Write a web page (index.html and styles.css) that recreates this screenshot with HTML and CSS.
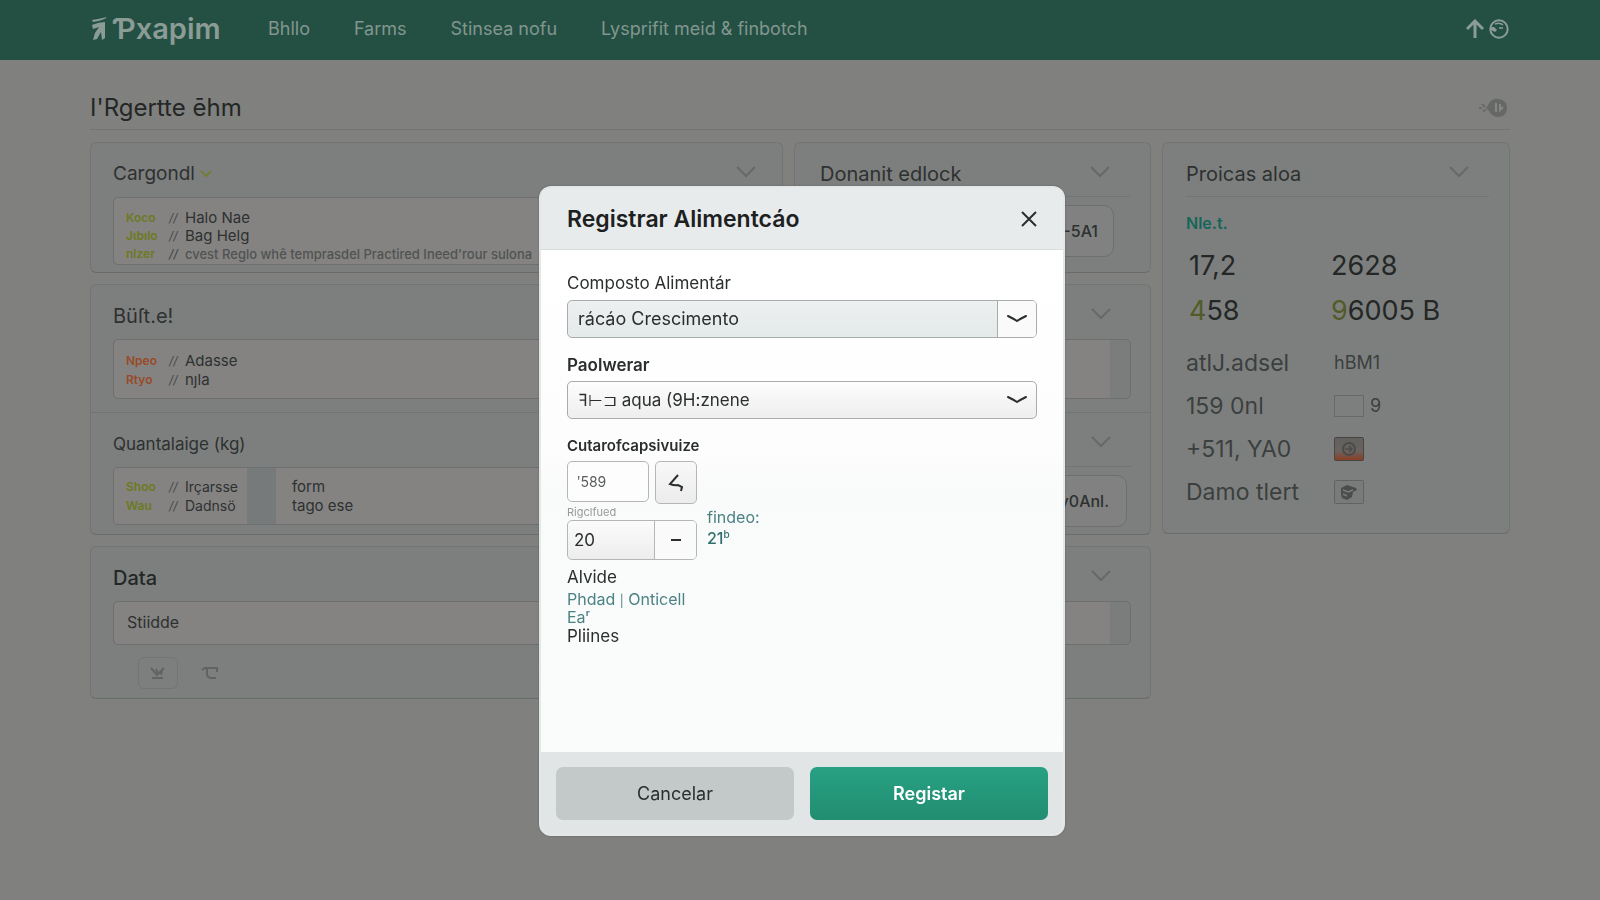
FILE: index.html
```html
<!DOCTYPE html>
<html lang="pt">
<head>
<meta charset="utf-8">
<title>Registrar Alimentcáo</title>
<link rel="stylesheet" href="styles.css">
</head>
<body>
<svg class="defs" aria-hidden="true">
  <symbol id="chev" viewBox="0 0 20 12"><path d="M1 1l9 9 9-9" fill="none" stroke="currentColor" stroke-width="2"/></symbol>
  <symbol id="flat" viewBox="0 0 20 10"><path d="M1 2q6 3 9 5 3-2 9-5" fill="none" stroke="currentColor" stroke-width="2" stroke-linecap="round"/></symbol>
</svg>

<header class="topbar">
  <a class="brand" href="#">
    <svg class="brand-mark" width="16" height="28" viewBox="0 0 16 28" aria-hidden="true"><path d="M0 5q7-1 15-3-2 3-14 5zM0 10q7-3 13-3v16l-3 2-1-8-4 7-4 1 2-7 4-6-6 2z" fill="currentColor"/></svg>
    <span>Ƥxapim</span>
  </a>
  <nav class="nav">
    <a href="#">Bhllo</a>
    <a href="#">Farms</a>
    <a href="#">Stinsea nofu</a>
    <a href="#">Lysprifit meid &amp; finbotch</a>
  </nav>
  <div class="tools">
    <button type="button" aria-label="Enviar"><svg width="18" height="20" viewBox="0 0 18 20"><path d="M9 19V3M1 10l8-8 8 8" fill="none" stroke="currentColor" stroke-width="3"/></svg></button>
    <button type="button" aria-label="Conta"><svg width="20" height="20" viewBox="0 0 20 20"><circle cx="10" cy="10" r="8.700" fill="none" stroke="currentColor" stroke-width="2"/><path d="M1 8l4 0 3 3-2 2-4-2z" fill="currentColor"/><path d="M6 5q5-2 8 1M10 9h4" fill="none" stroke="currentColor" stroke-width="1.500"/></svg></button>
  </div>
</header>

<main class="page">
  <div class="page-head">
    <h1>I'Rgertte ēhm</h1>
    <svg width="30" height="20" viewBox="0 0 30 20" aria-hidden="true"><path d="M1 10h3M4 6l3 3M5 13l3-1" stroke="#6a6b69" stroke-width="2"/><path d="M8 10q2-2 3-5 4-5 10-4 7 1 8 8 0 9-8 10-7 0-10-6z" fill="#666865"/><path d="M18 5v9M22 6v6l3-3" stroke="#858684" stroke-width="2" fill="none"/></svg>
  </div>

  <div class="columns">
    <div class="main">
      <section class="card cargo">
        <div class="card-head">
          <h2>Cargondl <svg class="lime" width="12" height="8" viewBox="0 0 12 8"><path d="M1 1l5 5 5-5" fill="none" stroke="currentColor" stroke-width="2"/></svg></h2>
          <svg class="chev"><use href="#chev"/></svg>
        </div>
        <div class="box rows">
          <div class="row"><b>Koco</b><i>//</i><span>Halo Nae</span></div>
          <div class="row"><b>Jɩbılo</b><i>//</i><span>Bag Helg</span></div>
          <div class="row small"><b>nlzer</b><i>//</i><span>cvest Reglo whê temprasdel Practired Ineed'rour sulona</span></div>
        </div>
      </section>

      <section class="card donor">
        <div class="card-head ruled">
          <h2>Donanit edlock</h2>
          <svg class="chev"><use href="#chev"/></svg>
        </div>
        <div class="chip">-5A1</div>
      </section>

      <section class="card wide">
        <div class="block">
          <div class="card-head">
            <h2>Büſt.e!</h2>
            <svg class="chev"><use href="#chev"/></svg>
          </div>
          <div class="box tail rows orange">
            <div class="row"><b>Npeo</b><i>//</i><span>Adasse</span></div>
            <div class="row"><b>Rtyo</b><i>//</i><span>nȷla</span></div>
          </div>
        </div>
        <div class="block split">
          <div class="qty">
            <div class="card-head"><h3>Quantalaige (kg)</h3></div>
            <div class="pair">
              <div class="rows cell">
                <div class="row"><b>Shoo</b><i>//</i><span>Irçarsse</span></div>
                <div class="row"><b>Wau</b><i>//</i><span>Dadnsö</span></div>
              </div>
              <div class="rows cell">
                <div class="row">form</div>
                <div class="row">tago ese</div>
              </div>
            </div>
          </div>
          <div class="amount">
            <div class="card-head ruled"><svg class="chev"><use href="#chev"/></svg></div>
            <div class="chip">y0Anl.</div>
          </div>
        </div>
      </section>

      <section class="card wide data">
        <div class="card-head">
          <h2 class="strong">Data</h2>
          <svg class="chev"><use href="#chev"/></svg>
        </div>
        <div class="box tail single">Stiidde</div>
        <div class="actions">
          <button type="button" class="framed" aria-label="Baixar"><svg width="16" height="14" viewBox="0 0 16 14"><path d="M1 2l6 7 7-7M6 3l2 4M2 12h11M11 9l1-4" fill="none" stroke="currentColor" stroke-width="2"/></svg></button>
          <button type="button" aria-label="Recortar"><svg width="18" height="14" viewBox="0 0 18 14"><path d="M1 4l3-2h12v4M6 1v8q1 3 4 3h5" fill="none" stroke="currentColor" stroke-width="2"/></svg></button>
        </div>
      </section>
    </div>

    <aside class="card side">
      <div class="card-head ruled">
        <h2>Proicas aloa</h2>
        <svg class="chev"><use href="#chev"/></svg>
      </div>
      <p class="tag">Nle.t.</p>
      <div class="stats big">
        <span>17,2</span><span>2628</span>
        <span><em>4</em>58</span><span><em>9</em>6005 B</span>
      </div>
      <div class="stats">
        <span>atlJ.adsel</span><span class="mini">hBM1</span>
        <span>159 0nl</span><span class="mini"><svg width="30" height="22"><rect x=".5" y=".5" width="29" height="21" fill="none" stroke="#666968"/></svg>9</span>
        <span>+511, YA0</span><span class="mini"><svg width="30" height="24" viewBox="0 0 30 24"><defs><linearGradient id="glow" x2="0" y2="1"><stop offset="0" stop-color="#606160"/><stop offset=".6" stop-color="#6b625d"/><stop offset="1" stop-color="#8a3c22"/></linearGradient></defs><rect x=".5" y=".5" width="29" height="23" rx="1" fill="url(#glow)" stroke="#4b4542"/><circle cx="15" cy="12" r="6" fill="none" stroke="#4a4c4b" stroke-width="2"/><path d="M11 12h7M15 9l3 3-3 3" fill="none" stroke="#4a4c4b" stroke-width="1.500"/></svg></span>
        <span>Damo tlert</span><span class="mini"><svg width="30" height="24" viewBox="0 0 30 24"><rect x=".5" y=".5" width="29" height="23" rx="1" fill="#787b7a" stroke="#5f6362"/><path d="M7 8l6-3 9 3 1 2-4 2-1 5-5 3-5-2-1-4z" fill="#4a4d4c"/><path d="M9 10l5 2 5-2M9 14l4 2" fill="none" stroke="#787b7a" stroke-width="1.500"/></svg></span>
      </div>
    </aside>
  </div>
</main>

<div class="overlay">
  <form class="modal" role="dialog" aria-labelledby="dlg-title">
    <div class="modal-head">
      <h2 id="dlg-title">Registrar Alimentcáo</h2>
      <button type="button" class="close" aria-label="Fechar"><svg width="16" height="16" viewBox="0 0 16 16"><path d="M1 1l14 14M15 1L1 15" stroke="currentColor" stroke-width="2"/></svg></button>
    </div>
    <div class="modal-body">
      <label for="feed">Composto Alimentár</label>
      <div class="select cool">
        <select id="feed"><option>rácáo Crescimento</option></select>
        <span class="arrow"><svg width="20" height="10"><use href="#flat"/></svg></span>
      </div>
      <label class="bold" for="lot">Paolwerar</label>
      <div class="select">
        <select id="lot"><option>ꟻ⊢⊐ aqua (9H:znene</option></select>
        <span class="arrow"><svg width="20" height="10"><use href="#flat"/></svg></span>
      </div>
      <label class="bold fine" for="count">Cutarofcapsivuize</label>
      <div class="line">
        <input id="count" class="count" type="text" value="ʹ589">
        <button type="button" class="step" aria-label="Anterior"><svg width="16" height="18" viewBox="0 0 16 18"><path d="M10 1L2 10q5 2 8 1l4 2-1 4" fill="none" stroke="currentColor" stroke-width="2"/></svg></button>
      </div>
      <div class="line second">
        <div>
          <label class="hint" for="num">Rigclfued</label>
          <div class="stepper">
            <input id="num" type="text" value="20">
            <button type="button" aria-label="Menos"><svg width="10" height="2"><rect width="10" height="2" fill="currentColor"/></svg></button>
          </div>
        </div>
        <p class="found">findeo:<br><b>21<sup>b</sup></b></p>
      </div>
      <p class="text">Alvide</p>
      <p class="links"><a href="#">Phdad</a> <span>|</span> <a href="#">Onticell</a><br><a href="#">Eaʳ</a></p>
      <p class="text">Pliines</p>
    </div>
    <div class="modal-foot">
      <button type="button" class="cancel">Cancelar</button>
      <button type="submit" class="submit">Registar</button>
    </div>
  </form>
</div>
</body>
</html>
```
FILE: styles.css
```css
* { box-sizing: border-box; }

body {
  margin: 0;
  min-height: 100vh;
  background: #80807e;
  color: #2d3130;
  font: 16px/20px Inter, "Liberation Sans", sans-serif;
}

h1, h2, h3, p { margin: 0; font-weight: 400; }
button { padding: 0; border: 0; background: none; color: inherit; font: inherit; }
svg { display: block; flex: none; }
a { color: inherit; text-decoration: none; }
.defs { position: absolute; width: 0; height: 0; }

.topbar {
  display: flex;
  align-items: center;
  height: 60px;
  padding: 0 91px 2px 90px;
  background: #245043;
  color: #8b9c96;
}
.brand { display: flex; align-items: center; gap: 4px; width: 178px; font-size: 29px; line-height: 40px; font-weight: 600; padding-left: 2px; }
.brand-mark { width: 16px; height: 28px; }
.nav { display: flex; gap: 44px; font-size: 18px; color: #82968f; }
.tools { display: flex; gap: 5px; margin-left: auto; }

.page { padding: 28px 90px 0; }
.page-head {
  display: flex;
  align-items: center;
  justify-content: space-between;
  height: 42px;
  padding-bottom: 2px;
  padding-right: 2px;
  border-bottom: 1px solid #727472;
}
h1 { font-size: 24px; line-height: 36px; color: #232726; }

.columns { display: grid; grid-template-columns: minmax(0, 1061fr) minmax(0, 348fr); gap: 11px; align-items: start; margin-top: 12px; }
.main { display: grid; grid-template-columns: minmax(0, 693fr) minmax(0, 357fr); gap: 11px; }
.card { border: 1px solid #717474; border-bottom-color: #686c6b; border-radius: 6px; background: #7d7f7e; }
.cargo { padding: 0 22px 7px; }
.donor { padding: 0 20px 7px 25px; }
.wide { grid-column: 1 / -1; }
.card-head { display: flex; align-items: center; justify-content: space-between; height: 54px; padding: 8px 16px 0 0; }
.donor .card-head, .block .card-head, .data .card-head { padding-right: 20px; }
.cargo .card-head { padding-right: 4px; }
.cargo h2 { font-size: 19px; }
.ruled { border-bottom: 1px solid #717473; }
h2 { display: flex; align-items: center; gap: 5px; font-size: 20px; line-height: 28px; }
h3 { font-size: 17px; line-height: 24px; }
.strong { font-weight: 500; color: #232726; }
.lime { color: #737d3a; }
.chev { width: 20px; height: 12px; margin-top: -4px; color: #666968; }

.box { border: 1px solid #6c6f6e; border-radius: 5px; background: #848382; }
.tail { background: linear-gradient(#7b7d7d, #7b7d7d) right / 20px 100% no-repeat, #848382; }
.rows { padding: 9px 12px; }
.row { display: flex; align-items: center; height: 19px; font-size: 15px; white-space: nowrap; }
.row b { flex: none; width: 43px; font-size: 12px; font-weight: 600; color: #6c7a20; }
.row i { flex: none; width: 16px; font-size: 12px; color: #444847; }
.orange b { color: #994a27; }
.orange { padding-top: 11px; }
.cargo .row { height: 18px; }
.cargo .rows { padding: 11px 12px 1px; }
.cargo .small { font-size: 13px; font-weight: 500; color: #505352; overflow: hidden; }
.chip {
  width: fit-content;
  min-width: 120px;
  height: 52px;
  margin: 8px 16px 0 auto;
  padding: 15px;
  border: 1px solid #6c6f6e;
  border-radius: 10px;
  background: #808180;
  text-align: right;
  font-size: 16px;
  font-weight: 500;
}

.block { padding: 0 19px 13px 22px; }
.block + .block { border-top: 1px solid #717474; }
.split { display: grid; grid-template-columns: 1fr 1fr; }
.block.split { padding-bottom: 7px; }
.amount .card-head { justify-content: flex-end; }
.amount .chip { margin-right: 4px; padding-right: 17px; }
.pair { display: flex; gap: 29px; border: 1px solid #6c6f6e; border-radius: 5px; background: #777a7a; }
.cell { background: #848382; border-radius: 4px 0 0 4px; }
.cell:first-child { width: 133px; padding-right: 0; }
.cell:first-child .row { font-size: 14px; }
.cell + .cell { flex: 1; padding-left: 16px; border-radius: 0; }
.data { padding: 0 19px 9px 22px; }
.single { height: 44px; padding: 10px 13px; }
.actions { display: flex; gap: 12px; margin: 12px 0 0 25px; color: #5f6362; }
.actions button { display: grid; place-items: center; width: 40px; height: 32px; }
.actions .framed { border: 1px solid #727574; border-radius: 6px; }

.side { padding: 0 20px 20px 23px; }
.side .card-head { padding-right: 20px; }
.tag { margin-top: 16px; font-size: 16px; font-weight: 600; color: #15665a; }
.stats { display: grid; grid-template-columns: 148px 1fr; grid-auto-rows: 43px; align-items: center; margin-top: 8px; font-size: 23px; color: #3b3f3e; white-space: nowrap; }
.stats.big { grid-auto-rows: 45px; margin-top: 10px; padding-left: 3px; grid-template-columns: 142px 1fr; font-size: 27px; color: #232726; }
.stats em { font-style: normal; color: #525b28; }
.mini { display: flex; align-items: center; gap: 6px; font-size: 18px; }

.overlay {
  position: fixed;
  inset: 0;
  display: flex;
  align-items: flex-start;
  justify-content: center;
  padding: 186px 0 0 4px;
}
.modal {
  width: 526px;
  border: 2px solid #e3e7e7;
  border-radius: 12px;
  background: #e3e7e7;
  color: #2b2e2e;
  overflow: hidden;
  box-shadow: 0 0 2px #5c5f5e;
}
.modal-head { display: flex; align-items: center; justify-content: space-between; height: 62px; padding: 0 26px; background: #e8ebec; border-bottom: 1px solid #d9dddd; }
.modal-head h2 { font-size: 23px; font-weight: 600; color: #1d2021; }
.modal-body { padding: 22px 26px 105px; background: linear-gradient(#fff, #fdfdfd 200px, #f9fafa 240px, #fafbfb); }
.modal-body label { display: block; font-size: 17px; line-height: 22px; margin-bottom: 6px; }
.modal-body .bold { margin-top: 16px; margin-bottom: 5px; font-weight: 600; }
.modal-body .fine { margin-bottom: 4px; font-size: 15px; }
.select { position: relative; height: 38px; }
.select select {
  appearance: none;
  width: 100%;
  height: 100%;
  padding: 0 44px 0 11px;
  border: 1px solid #a9acac;
  border-radius: 5px;
  background: linear-gradient(#fdfdfd, #eeeeee);
  color: #2b2e2e;
  font: inherit;
  font-size: 17px;
}
.select.cool select { background: linear-gradient(#edf0f1, #e4e9ea); font-size: 18px; padding-left: 10px; }
.arrow { position: absolute; inset: 1px 1px 1px auto; width: 39px; display: grid; place-items: center; pointer-events: none; border-radius: 0 4px 4px 0; }
.cool .arrow { border-left: 1px solid #a9acac; background: #fafafa; }
.line { display: flex; gap: 6px; }
.count { width: 82px; height: 41px; padding: 0 9px; border: 1px solid #b5b7b7; border-radius: 5px; background: #fdfdfd; color: #5a5d5d; font: inherit; font-size: 14px; }
.step { display: grid; place-items: center; width: 42px; height: 43px; border: 1px solid #b5b7b7; border-radius: 5px; background: linear-gradient(#f8f8f8, #ececec); }
.modal-body .hint { margin: 0; font-size: 11px; line-height: 16px; color: #979a9a; }
.stepper { display: flex; width: 130px; height: 40px; border: 1px solid #b5b7b7; border-radius: 5px; background: linear-gradient(#fbfbfb, #ededed); overflow: hidden; }
.stepper input { width: 87px; padding: 0 6px; border: 0; border-right: 1px solid #b5b7b7; background: none; color: inherit; font: inherit; font-size: 17px; }
.stepper button { flex: 1; display: grid; place-items: center; background: #fafafa; }
.found { padding: 3px 0 0 4px; color: #4d8285; line-height: 21px; }
.found b { font-weight: 500; color: #2f706c; }
.found sup { font-size: 10px; line-height: 0; }
.text { margin-top: 6px; font-size: 17px; line-height: 22px; }
.links { margin-top: 3px; font-size: 16px; line-height: 16px; color: #4d8285; }
.links span { font-size: 12px; }
.links + .text { margin-top: 0; }
.modal-foot { display: grid; grid-template-columns: 1fr 1fr; gap: 16px; padding: 15px 15px 14px; background: #e1e5e5; }
.modal-foot button { height: 53px; border-radius: 7px; font-size: 18px; }
.modal-foot .cancel { background: #c3c8c8; }
.submit { background: linear-gradient(#28a182, #218d71); color: #fff; font-weight: 600; }
```
